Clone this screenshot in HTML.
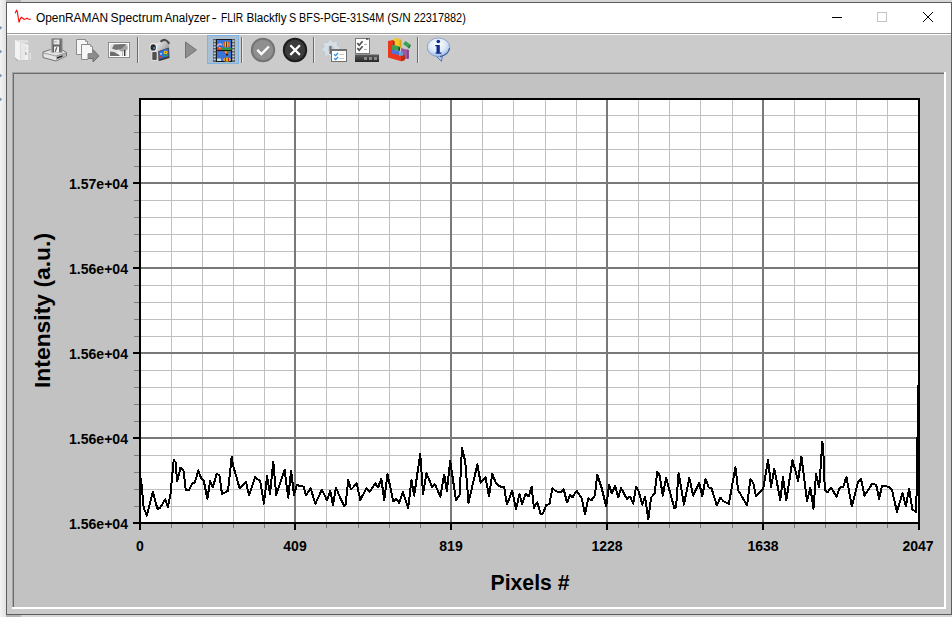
<!DOCTYPE html><html><head><meta charset="utf-8"><style>html,body{margin:0;padding:0;width:952px;height:617px;overflow:hidden;background:#e8e8e8}svg{display:block}text{font-family:"Liberation Sans",sans-serif}.lb{font-size:14px;font-weight:bold;fill:#000}.tt{font-size:22px;font-weight:bold;fill:#000}.ti{font-size:12.5px;fill:#000}</style></head><body>
<svg width="952" height="617" viewBox="0 0 952 617">
<defs><linearGradient id="lg" x1="0" x2="1" y1="0" y2="0"><stop offset="0" stop-color="#f4f4f4"/><stop offset="1" stop-color="#e2e2e2"/></linearGradient><linearGradient id="flpg" x1="0" y1="0" x2="1" y2="0"><stop offset="0" stop-color="#c4c4c4"/><stop offset="0.25" stop-color="#5e5e5e"/><stop offset="0.8" stop-color="#6a6a6a"/><stop offset="1" stop-color="#8a8a8a"/></linearGradient><linearGradient id="camg" x1="0" y1="0" x2="1" y2="1"><stop offset="0" stop-color="#f6f6f6"/><stop offset="0.5" stop-color="#b4b4b4"/><stop offset="1" stop-color="#6a6a6a"/></linearGradient><linearGradient id="barg" x1="0" y1="0" x2="0" y2="1"><stop offset="0" stop-color="#5e5e5e"/><stop offset="1" stop-color="#262626"/></linearGradient><radialGradient id="infog" cx="0.45" cy="0.35" r="0.7"><stop offset="0" stop-color="#ffffff"/><stop offset="0.55" stop-color="#dce8f7"/><stop offset="1" stop-color="#8fb0e0"/></radialGradient></defs>
<rect x="0" y="0" width="952" height="617" fill="#e8e8e8"/>
<rect x="0" y="0" width="6" height="617" fill="url(#lg)"/>
<polygon points="0,25.9 2.2,27.8 0,29.7" fill="#7d93a8"/>
<polygon points="0,49.7 2.2,51.6 0,53.5" fill="#7d93a8"/>
<polygon points="0,73.7 2.2,75.6 0,77.5" fill="#7d93a8"/>
<polygon points="0,97.5 2.2,99.4 0,101.3" fill="#7d93a8"/>
<rect x="6" y="0" width="946" height="2" fill="#d6d6d6"/>
<rect x="6" y="0" width="15" height="2" fill="#b4b4b4"/>
<rect x="6" y="615" width="946" height="2" fill="#d6d6d6"/>
<rect x="6" y="615" width="15" height="2" fill="#b4b4b4"/>
<rect x="6.5" y="2.5" width="945" height="612" fill="#cbcbcb" stroke="#5c5c5c" stroke-width="1"/>
<rect x="7" y="3" width="944" height="30" fill="#fff"/>
<rect x="7" y="33" width="944" height="1" fill="#9c9c9c"/>
<rect x="7" y="34" width="944" height="1" fill="#fff"/>
<rect x="12" y="72" width="934" height="537" fill="#fff"/>
<rect x="12" y="72" width="932" height="535" fill="#a4a4a4"/>
<rect x="13" y="73" width="931" height="534" fill="#6a6a6a"/>
<rect x="14" y="74" width="930" height="533" fill="#c2c2c2"/>
<polyline points="15.2,13.3 16.5,10.4 17.5,12 18.2,17.5 19.1,22.4 20.1,19.1 21.4,17.2 22.7,18.2 24.3,19.4 25.9,18.8 27.2,18.2 28.5,19.3 30.8,19.3" fill="none" stroke="#f00" stroke-width="1.1"/>
<text x="35.9" y="22" class="ti" textLength="72.1" lengthAdjust="spacingAndGlyphs">OpenRAMAN</text>
<text x="110.6" y="22" class="ti" textLength="52.0" lengthAdjust="spacingAndGlyphs">Spectrum</text>
<text x="164.6" y="22" class="ti" textLength="45.3" lengthAdjust="spacingAndGlyphs">Analyzer</text>
<text x="211.6" y="22" class="ti" textLength="5.3" lengthAdjust="spacingAndGlyphs">-</text>
<text x="220.9" y="22" class="ti" textLength="22.3" lengthAdjust="spacingAndGlyphs">FLIR</text>
<text x="246.4" y="22" class="ti" textLength="40.1" lengthAdjust="spacingAndGlyphs">Blackfly</text>
<text x="289.1" y="22" class="ti" textLength="7.2" lengthAdjust="spacingAndGlyphs">S</text>
<text x="299.1" y="22" class="ti" textLength="85.2" lengthAdjust="spacingAndGlyphs">BFS-PGE-31S4M</text>
<text x="387.2" y="22" class="ti" textLength="23.4" lengthAdjust="spacingAndGlyphs">(S/N</text>
<text x="413.7" y="22" class="ti" textLength="52.1" lengthAdjust="spacingAndGlyphs">22317882)</text>
<path d="M832 17.5H842" stroke="#000" stroke-width="1"/>
<rect x="877.5" y="12.5" width="9" height="9" fill="none" stroke="#c4c4c4" stroke-width="1"/>
<path d="M923 12L933 22M933 12L923 22" stroke="#000" stroke-width="1"/>
<rect x="137" y="37" width="1" height="26" fill="#6c6c6c"/><rect x="138" y="37" width="1" height="26" fill="#e6e6e6"/>
<rect x="241" y="37" width="1" height="26" fill="#6c6c6c"/><rect x="242" y="37" width="1" height="26" fill="#e6e6e6"/>
<rect x="313" y="37" width="1" height="26" fill="#6c6c6c"/><rect x="314" y="37" width="1" height="26" fill="#e6e6e6"/>
<rect x="417" y="37" width="1" height="26" fill="#6c6c6c"/><rect x="418" y="37" width="1" height="26" fill="#e6e6e6"/>
<g stroke="none"><polygon points="15,40 20.5,42.5 20.5,60.5 15,58.5" fill="#f3f3f3"/><polygon points="15,40 27.5,40.3 29,42.5 20.5,42.5" fill="#e2e2e2"/><polygon points="20.5,42.5 25,43 25,60.2 20.5,60.5" fill="#e8e8e8"/><rect x="20.3" y="42.5" width="0.6" height="18" fill="#d4d4d4"/><polygon points="25,44.3 28.5,44.5 28.5,59.8 25,60.2" fill="#f2f2f2"/><rect x="28.4" y="44.5" width="0.7" height="15.3" fill="#d0d0d0"/><rect x="29.6" y="53" width="1.3" height="6.5" fill="#e6e6e6"/><rect x="25.4" y="51.8" width="0.9" height="2.6" fill="#8a8a8a"/><rect x="25.4" y="54" width="1.8" height="0.6" fill="#9a9a9a"/><rect x="25.5" y="46.5" width="0.7" height="3.5" fill="#c0c0c0"/><polygon points="14.5,57.8 15.3,57.8 17.8,60.6 17,61" fill="#9c9c9c"/><polygon points="19,60.6 28.5,60 28.5,61 19,61.3" fill="#c6c6c6"/></g>
<g><polygon points="43,52 50.5,49.5 62.5,50 66.5,52.5 66.5,56 56,61 43,57.5" fill="#e4e4e4" stroke="#5a5a5a" stroke-width="0.8"/><polygon points="56,56 66,52.8 66,56 56,60.5" fill="#b4b4b4"/><path d="M43.5 53L56 56L66 52.8" fill="none" stroke="#8a8a8a" stroke-width="0.8"/><polygon points="57,57.2 62.5,55.2 62.5,56.8 57,58.8" fill="#1e1e1e"/><rect x="50.5" y="38.5" width="12" height="14" fill="url(#flpg)"/><rect x="53.5" y="39.5" width="6" height="5" fill="#e8e8e8"/><rect x="54" y="41.5" width="3" height="0.8" fill="#a0a0a0"/><rect x="54" y="46.5" width="5" height="6" fill="#f2f2f2"/><path d="M56.8 47.2L55.2 51.8" stroke="#606060" stroke-width="1.2"/></g>
<g><path d="M76.5 39.5H85.5L87.5 41.5V54.5H76.5Z" fill="#f6f6f6" stroke="#8a8a8a" stroke-width="1"/><path d="M85.5 39.5V41.5H87.5" fill="#e0e0e0" stroke="#8a8a8a" stroke-width="0.8"/><polygon points="88,49.5 93,49.5 99,56 93,62 93,58.5 88,58.5" fill="#8c8c8c" stroke="#6c6c6c" stroke-width="1"/><path d="M81.5 44.5H90.5L92.5 46.5V53.5H88V59.5H81.5Z" fill="#f6f6f6" stroke="#8a8a8a" stroke-width="1"/><path d="M90.5 44.5V46.5H92.5" fill="#e0e0e0" stroke="#8a8a8a" stroke-width="0.8"/></g>
<g><rect x="108.5" y="42.5" width="21" height="15" fill="#fff" stroke="#8c8c8c" stroke-width="1"/><rect x="110" y="44" width="18" height="12" fill="#e2e2e2"/><polygon points="113,56 120,50 128,47 128,56" fill="#f2f2f2"/><polygon points="119,50 121,45.5 124,44.5 127.5,46 127.5,49.5 125,51 121,51.5" fill="#a2a2a2"/><polygon points="112,48.5 114,44.5 123,44 126.5,44 121,49 116,50" fill="#747474"/><polygon points="110,51.5 114,52 118.5,54.5 120,56 110,56" fill="#6e6e6e"/><rect x="124" y="50" width="1.4" height="6" fill="#3a3a3a"/><rect x="122" y="51" width="1" height="5" fill="#b8b8b8"/></g>
<g><polygon points="155.5,44.5 161,41 169,42.5 169.5,56 159,60.5 155.5,57" fill="url(#camg)"/><path d="M160.5 41.8Q165.5 37.2 169.3 43.8" stroke="#4a4a4a" stroke-width="2.2" fill="none"/><polygon points="158.5,51.5 168.5,48 168.8,56.5 159,59.5" fill="#2f6ee0" stroke="#2a2a2a" stroke-width="0.6"/><circle cx="165.6" cy="52.3" r="1.9" fill="#f2c41e"/><circle cx="165.6" cy="52.3" r="0.7" fill="#c03010"/><rect x="163.5" y="54.6" width="4.5" height="1.6" fill="#2aa040"/><rect x="159.8" y="55.8" width="2.2" height="1.8" fill="#e03020"/><rect x="160" y="53" width="2" height="1.5" fill="#a8d0f0"/><polygon points="158,59.8 169.5,56.2 169.5,58 159.5,61" fill="#3a3a3a"/><rect x="151.8" y="51.5" width="5.4" height="9" rx="1.4" fill="#505050" stroke="#f0f0f0" stroke-width="0.9"/><ellipse cx="153.4" cy="47.3" rx="3.9" ry="4.3" fill="#eeeeee"/><ellipse cx="153.2" cy="47.4" rx="2.7" ry="3.2" fill="#2c2c2c"/><ellipse cx="154.2" cy="47.9" rx="1.1" ry="1" fill="#3a9ad8"/></g>
<polygon points="185.5,42 196.5,50 185.5,58" fill="#8e8e8e" stroke="#727272" stroke-width="1"/>
<rect x="207.5" y="35.5" width="31" height="28" fill="#a9bfd3" stroke="#7eb4e2" stroke-width="1"/>
<g><rect x="213" y="39" width="22" height="23" fill="#5e5e5e"/><rect x="216.5" y="39.5" width="15" height="22" fill="#3a74d6" stroke="#1a1a1a" stroke-width="1"/><path d="M216.5 50.5H231.5" stroke="#1a1a1a" stroke-width="1.2"/><rect x="222" y="47.8" width="9.5" height="2.2" fill="#2a9a40"/><ellipse cx="226.6" cy="44.6" rx="3.2" ry="3" fill="#f0c820"/><path d="M224.6 42.3Q223.8 44.6 225 47M228.6 42.3Q229.4 44.6 228.2 47" stroke="#d03018" stroke-width="0.9" fill="none"/><path d="M226.6 41.6V47.6" stroke="#202020" stroke-width="0.9"/><path d="M217 46.5Q219 42.5 222 45" stroke="#e8b0d0" stroke-width="1.4" fill="none"/><rect x="217" y="47.5" width="5" height="2.5" fill="#e84020"/><rect x="219" y="47.2" width="1.5" height="1.2" fill="#f0d020"/><path d="M223.5 51.3H230.5L227 54.5Z" fill="#e04020"/><rect x="225" y="51.3" width="1.6" height="1.6" fill="#f0c020"/><rect x="227.6" y="51.3" width="1.4" height="1.6" fill="#30a040"/><rect x="226" y="54" width="2" height="1.6" fill="#202020"/><ellipse cx="227" cy="59.5" rx="3.6" ry="2" fill="#f0c820"/><rect x="224.8" y="57.5" width="1.3" height="3.5" fill="#c02010"/><rect x="227.8" y="57.5" width="1.3" height="3.5" fill="#c02010"/><rect x="217" y="58.5" width="4" height="2.5" fill="#c8dcea"/><rect x="213.6" y="40.30" width="2" height="1.6" fill="#c4d8ea"/><rect x="232.4" y="40.30" width="2" height="1.6" fill="#c4d8ea"/><rect x="213.6" y="43.35" width="2" height="1.6" fill="#c4d8ea"/><rect x="232.4" y="43.35" width="2" height="1.6" fill="#c4d8ea"/><rect x="213.6" y="46.40" width="2" height="1.6" fill="#c4d8ea"/><rect x="232.4" y="46.40" width="2" height="1.6" fill="#c4d8ea"/><rect x="213.6" y="49.45" width="2" height="1.6" fill="#c4d8ea"/><rect x="232.4" y="49.45" width="2" height="1.6" fill="#c4d8ea"/><rect x="213.6" y="52.50" width="2" height="1.6" fill="#c4d8ea"/><rect x="232.4" y="52.50" width="2" height="1.6" fill="#c4d8ea"/><rect x="213.6" y="55.55" width="2" height="1.6" fill="#c4d8ea"/><rect x="232.4" y="55.55" width="2" height="1.6" fill="#c4d8ea"/><rect x="213.6" y="58.60" width="2" height="1.6" fill="#c4d8ea"/><rect x="232.4" y="58.60" width="2" height="1.6" fill="#c4d8ea"/></g>
<circle cx="263" cy="50" r="11.2" fill="#8f8f8f" stroke="#747474" stroke-width="2"/><path d="M257.3 49.9L261.4 54L268.9 46.5" fill="none" stroke="#fff" stroke-width="2.3"/>
<circle cx="295" cy="50" r="11.2" fill="#3b3b3b" stroke="#1c1c1c" stroke-width="2"/><path d="M290.3 45.3L299.9 54.9M299.9 45.3L290.3 54.9" fill="none" stroke="#fff" stroke-width="2.2"/>
<polygon points="340.02,46.91 340.20,48.70 338.06,50.10 337.65,51.46 338.65,53.81 337.51,55.21 335.00,54.69 333.76,55.35 332.79,57.72 331.00,57.90 329.60,55.76 328.24,55.35 325.89,56.35 324.49,55.21 325.01,52.70 324.35,51.46 321.98,50.49 321.80,48.70 323.94,47.30 324.35,45.94 323.35,43.59 324.49,42.19 327.00,42.71 328.24,42.05 329.21,39.68 331.00,39.50 332.40,41.64 333.76,42.05 336.11,41.05 337.51,42.19 336.99,44.70 337.65,45.94" fill="#d6dee6" stroke="#bcc6ce" stroke-width="0.7"/>
<circle cx="331" cy="48.7" r="3.2" fill="#c4ccd4"/>
<rect x="329.5" y="46" width="2" height="8" fill="#6e6e6e"/>
<rect x="331.5" y="49.5" width="15" height="12" fill="#fff" stroke="#707070" stroke-width="1"/><rect x="331" y="49" width="16" height="2" fill="#707070"/><path d="M334.2 54.2L335.6 55.6L338 53M334.2 58.2L335.6 59.6L338 57" fill="none" stroke="#2a8ae8" stroke-width="1.3"/><path d="M339.5 54.5H344M339.5 58.5H344" stroke="#c4c4c4" stroke-width="1"/>
<rect x="355.5" y="38.5" width="14" height="15" fill="#fff" stroke="#787878" stroke-width="1"/><path d="M357.3 43.2L359.2 45.2L362.6 41.2M357.3 48.2L359.2 50.2L362.6 46.2" fill="none" stroke="#505050" stroke-width="1.7"/><rect x="366" y="38.5" width="2.5" height="1.2" fill="#3a3a3a"/><path d="M364 44.5H367M364 49.5H367" stroke="#b0b0b0" stroke-width="1"/><rect x="355" y="54.5" width="24" height="7.5" fill="url(#barg)"/><rect x="364" y="57" width="3" height="3" fill="#8a8a8a"/><rect x="369" y="57" width="3" height="3" fill="#8a8a8a"/><rect x="374" y="57" width="3" height="3" fill="#8a8a8a"/>
<g><polygon points="393,39 396,38 401,39.5 401.5,48 396,49 393,47" fill="#f2c828"/><polygon points="399.5,39.5 401.5,40 401.5,48 399.5,48.5" fill="#d8a818"/><polygon points="401,48 407,49.5 408.8,50 408.8,58.5 405,59 401,57" fill="#9c5aa2"/><polygon points="407,49.5 408.8,50 408.8,58.5 407,59" fill="#7a4a80"/><polygon points="388,41 393,40 394.5,41.5 394.5,52.5 405,55 405,60 401,61.2 388,57.5" fill="#e8381e"/><polygon points="393,40.5 394.5,41.5 394.5,52.5 393,52" fill="#b82414"/><polygon points="401,56 405,55 405,60 401,61.2" fill="#c02a18"/><polygon points="392,45 398.5,46 399.5,47.5 399.5,51 392,50" fill="#3ca052"/><polygon points="398.5,46.5 400,47.5 400,51 398.5,50.5" fill="#184c2c"/><polygon points="392,49.8 399,51 399,55 392,53.5" fill="#4a72e6"/><polygon points="399,51.5 402.5,52 403,55.5 399,56" fill="#5aaae2"/><polygon points="403,44 405.5,41 411,45 409,48.5" fill="#3ca052"/><polygon points="409.5,45.5 411,45 409,48.5 408,48" fill="#1e6a3a"/></g>
<g><polygon points="435.5,55.5 441.5,61.5 442.5,55" fill="#a8c4e8" stroke="#4a6aa0" stroke-width="0.8"/><ellipse cx="438.5" cy="47.3" rx="11.3" ry="9.3" fill="url(#infog)" stroke="#7e98c0" stroke-width="0.8"/><path d="M449.5 48Q448.5 55 440 56.6" stroke="#34569a" stroke-width="1.1" fill="none"/><circle cx="438.3" cy="41.5" r="1.8" fill="#102a90"/><path d="M435.2 45H439.8V52.4H441.4V53.7H435.6V52.4H436.5V46.2H435.2Z" fill="#102a90"/></g>
<rect x="140" y="99" width="778" height="423" fill="#fff"/>
<path d="M171.5 99V522M202.5 99V522M233.5 99V522M264.5 99V522M326.5 99V522M358.5 99V522M389.5 99V522M420.5 99V522M482.5 99V522M513.5 99V522M545.5 99V522M576.5 99V522M638.5 99V522M669.5 99V522M700.5 99V522M732.5 99V522M794.5 99V522M825.5 99V522M856.5 99V522M887.5 99V522M140 506.5H918M140 489.5H918M140 472.5H918M140 455.5H918M140 421.5H918M140 404.5H918M140 387.5H918M140 370.5H918M140 336.5H918M140 319.5H918M140 302.5H918M140 285.5H918M140 251.5H918M140 234.5H918M140 217.5H918M140 200.5H918M140 166.5H918M140 149.5H918M140 132.5H918M140 115.5H918" stroke="#c0c0c0" stroke-width="1" fill="none"/>
<path d="M171.5 523V528M202.5 523V528M233.5 523V528M264.5 523V528M326.5 523V528M358.5 523V528M389.5 523V528M420.5 523V528M482.5 523V528M513.5 523V528M545.5 523V528M576.5 523V528M638.5 523V528M669.5 523V528M700.5 523V528M732.5 523V528M794.5 523V528M825.5 523V528M856.5 523V528M887.5 523V528M134 506.5H139M134 489.5H139M134 472.5H139M134 455.5H139M134 421.5H139M134 404.5H139M134 387.5H139M134 370.5H139M134 336.5H139M134 319.5H139M134 302.5H139M134 285.5H139M134 251.5H139M134 234.5H139M134 217.5H139M134 200.5H139M134 166.5H139M134 149.5H139M134 132.5H139M134 115.5H139" stroke="#7c7c7c" stroke-width="1" fill="none"/>
<path d="M295 99V522M451 99V522M607 99V522M763 99V522M140 183H918M140 268H918M140 353H918M140 438H918" stroke="#787878" stroke-width="2" fill="none"/>
<polyline points="140.9,477.8 143.7,507.8 146.9,515.6 152.9,491.6 157.4,509.0 160.0,508.0 165.2,499.4 168.0,507.0 170.4,494.8 173.7,460.0 175.5,462.0 177.2,481.5 180.5,467.6 183.4,470.2 185.8,490.0 189.0,490.0 192.3,483.5 195.0,482.2 198.3,470.2 201.2,478.6 203.6,480.0 207.4,498.9 210.1,481.0 212.9,487.5 216.6,473.8 219.4,475.4 222.0,494.0 228.0,490.8 231.7,456.7 233.3,466.5 236.0,475.4 239.6,488.3 246.0,481.5 249.0,495.6 255.1,477.0 260.3,481.5 263.9,503.7 267.1,476.2 270.0,494.0 273.3,461.6 276.2,494.8 284.6,469.7 288.2,497.7 291.1,470.8 294.0,494.8 296.8,485.1 303.7,486.7 306.0,495.6 310.6,488.3 315.4,503.7 321.9,489.6 327.1,500.5 330.3,490.8 332.9,504.9 336.0,487.5 338.9,494.8 344.0,505.9 345.5,505.0 348.3,479.9 351.0,489.6 356.7,483.5 360.3,500.0 366.4,488.3 369.7,491.9 375.3,483.5 378.1,487.5 381.3,478.6 384.2,500.0 387.5,473.8 393.2,501.3 396.4,498.9 399.2,503.0 402.9,491.9 408.2,507.8 411.5,479.9 414.2,495.6 420.2,454.0 423.1,494.0 426.4,473.0 432.0,486.7 434.9,484.3 440.4,496.5 444.2,474.6 446.9,490.8 450.2,460.8 456.0,500.5 459.6,494.8 462.0,447.5 465.2,461.6 468.5,502.6 477.4,464.4 480.6,482.7 485.5,477.0 489.0,496.5 492.3,473.8 496.0,483.5 500.9,487.0 504.1,486.7 506.9,504.6 512.2,490.8 516.0,509.4 519.5,494.0 522.0,503.7 525.7,494.0 528.9,496.5 531.6,486.7 534.0,507.8 537.3,502.1 540.5,513.5 543.0,513.5 546.2,504.9 549.4,504.2 552.4,488.0 555.9,491.3 560.8,492.4 563.7,489.2 567.0,502.6 570.2,494.8 572.5,497.3 576.7,490.8 581.5,497.7 585.1,514.3 588.3,498.1 591.3,500.5 594.8,495.6 597.3,475.0 601.3,486.7 606.2,506.2 609.1,485.1 611.8,493.2 615.1,485.9 618.3,497.3 621.1,488.0 626.9,498.9 630.0,496.5 633.2,503.7 636.1,486.7 638.5,490.8 642.3,504.9 645.0,496.5 648.3,519.5 651.0,497.7 654.7,493.5 657.2,471.8 659.6,475.4 662.8,495.6 666.1,477.8 674.2,507.8 676.0,507.5 678.6,473.0 683.9,504.6 689.3,477.8 693.2,495.6 699.3,482.7 702.2,496.5 705.5,478.9 708.7,487.5 711.5,488.3 716.8,505.4 720.4,497.7 723.6,501.3 728.9,503.7 735.4,467.0 738.2,490.3 747.1,505.4 750.3,479.4 753.2,482.7 756.0,496.5 763.3,488.3 768.1,460.0 771.1,486.7 774.3,468.9 780.3,500.0 783.0,477.0 786.3,500.5 792.5,460.0 798.1,481.0 801.4,456.7 807.0,501.0 810.3,487.5 813.5,508.6 816.0,473.8 819.2,487.5 822.4,441.7 823.6,456.7 824.8,490.0 827.6,492.4 830.8,487.5 836.6,496.5 839.9,487.5 843.1,487.0 846.4,477.0 851.9,506.5 858.0,481.9 861.0,479.0 864.5,495.6 872.3,483.5 876.2,485.1 879.1,498.9 882.0,485.9 888.5,486.7 892.1,490.3 896.9,511.8 902.6,492.9 905.8,506.2 909.1,488.7 912.3,509.4 916.1,511.8 917.2,470.5 918.0,385.0" fill="none" stroke="#000" stroke-width="2" stroke-linejoin="round" shape-rendering="crispEdges"/>
<path d="M140 98V530M919 98V530M139 99H919M133 523H919M295 523V530M451 523V530M607 523V530M763 523V530M133 183H140M133 268H140M133 353H140M133 438H140" stroke="#000" stroke-width="2" fill="none"/>
<text x="128" y="529" text-anchor="end" class="lb" textLength="59" lengthAdjust="spacingAndGlyphs">1.56e+04</text>
<text x="128" y="444" text-anchor="end" class="lb" textLength="59" lengthAdjust="spacingAndGlyphs">1.56e+04</text>
<text x="128" y="359" text-anchor="end" class="lb" textLength="59" lengthAdjust="spacingAndGlyphs">1.56e+04</text>
<text x="128" y="274" text-anchor="end" class="lb" textLength="59" lengthAdjust="spacingAndGlyphs">1.56e+04</text>
<text x="128" y="189" text-anchor="end" class="lb" textLength="59" lengthAdjust="spacingAndGlyphs">1.57e+04</text>
<text x="140" y="551" text-anchor="middle" class="lb">0</text>
<text x="295" y="551" text-anchor="middle" class="lb">409</text>
<text x="451" y="551" text-anchor="middle" class="lb">819</text>
<text x="607" y="551" text-anchor="middle" class="lb">1228</text>
<text x="763" y="551" text-anchor="middle" class="lb">1638</text>
<text x="918" y="551" text-anchor="middle" class="lb">2047</text>
<text x="530" y="590" text-anchor="middle" class="tt" textLength="79" lengthAdjust="spacingAndGlyphs">Pixels #</text>
<text transform="translate(50.3 388) rotate(-90)" x="0" y="0" class="tt" textLength="155" lengthAdjust="spacingAndGlyphs">Intensity (a.u.)</text>
</svg></body></html>
